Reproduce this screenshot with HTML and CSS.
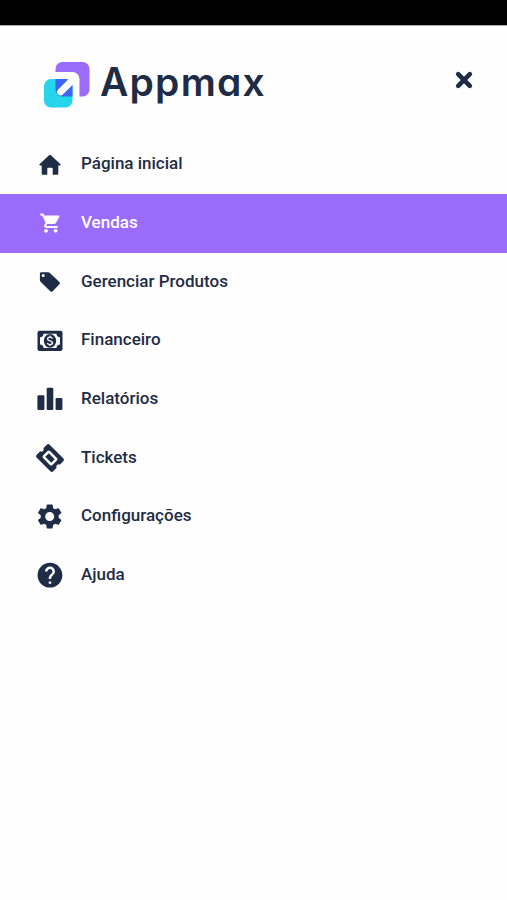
FILE: index.html
```html
<!DOCTYPE html>
<html lang="pt-BR">
<head>
    <meta charset="UTF-8">
    <meta name="viewport" content="width=device-width, initial-scale=1.0">
    <title>Appmax</title>
    <link rel="stylesheet" href="styles.css">
</head>
<body>
    <div class="status-bar"></div>

    <header class="header">
        <a class="logo" href="#">
            <svg class="logo-mark" viewBox="0 0 46 46">
                <path fill="#9b6bfb" d="M11.500 10V7a7 7 0 0 1 7-7H38.500a7 7 0 0 1 7 7v20.500a7 7 0 0 1-7 7h-3V17a7 7 0 0 0-7-7z"/>
                <rect fill="#25d5ea" y="17" width="28.500" height="28.500" rx="7"/>
                <path fill="#3e63f5" d="M11.500 17h10a7 7 0 0 1 7 7v10.500h-10a7 7 0 0 1-7-7z"/>
                <path stroke="#fefefe" stroke-width="7" stroke-linecap="round" d="M16.600 29.900L30 16.500"/>
            </svg>
            <span class="logo-text">Appmax</span>
        </a>
        <button class="close" aria-label="Fechar">
            <svg viewBox="0 0 20 20"><path d="M4.200 4.200l11.600 11.600M15.800 4.200L4.200 15.800"/></svg>
        </button>
    </header>

    <nav class="menu">
        <a class="item" href="#">
            <svg class="icon" viewBox="0 0 28 28"><path d="M13.100 4.300a1.300 1.300 0 0 1 1.800 0l9.400 8.700c.6.600.3 1.500-.5 1.500h-1.500v8.200a1 1 0 0 1-1 1h-4.600v-6.200a.8.800 0 0 0-.8-.8h-3.800a.8.800 0 0 0-.8.800v6.200H6.700a1 1 0 0 1-1-1v-8.200H4.200c-.8 0-1.100-.9-.5-1.500z"/></svg>
            <span>Página inicial</span>
        </a>
        <a class="item active" href="#">
            <svg class="icon" viewBox="0 0 28 28"><path transform="translate(3.300 2.600) scale(.96)" d="M7 18c-1.100 0-1.990.9-1.990 2S5.900 22 7 22s2-.9 2-2-.9-2-2-2zM1 2v2h2l3.600 7.590-1.350 2.450c-.16.280-.25.610-.25.960 0 1.100.9 2 2 2h12v-2H7.420c-.14 0-.25-.11-.25-.25l.03-.12.900-1.630h7.450c.75 0 1.410-.41 1.750-1.030l3.580-6.490A1 1 0 0 0 20 4H5.210l-.94-2H1zm16 16c-1.100 0-1.990.9-1.990 2s.890 2 1.990 2 2-.9 2-2-.9-2-2-2z"/></svg>
            <span>Vendas</span>
        </a>
        <a class="item" href="#">
            <svg class="icon" viewBox="0 0 28 28"><path fill-rule="evenodd" d="M5.300 4.200H12.200a2 2 0 0 1 1.400.6l9.800 9.100a1.700 1.700 0 0 1 0 2.400l-6.700 6.900a1.700 1.700 0 0 1-2.400 0l-9.700-9.400a2 2 0 0 1-.7-1.500V5.600a1.400 1.400 0 0 1 1.400-1.400zM7.200 5.900a1.500 1.500 0 1 0 0 3 1.500 1.500 0 0 0 0-3z"/></svg>
            <span>Gerenciar Produtos</span>
        </a>
        <a class="item" href="#">
            <svg class="icon" viewBox="0 0 28 28">
                <rect x="1.500" y="3.700" width="25" height="20.300" rx="2"/>
                <path class="cut" d="M7.500 6.700h13a3.600 3.600 0 0 0 3.500 3.500v7.300a3.600 3.600 0 0 0-3.500 3.500h-13A3.600 3.600 0 0 0 4 17.500v-7.300a3.600 3.600 0 0 0 3.500-3.500z"/>
                <ellipse cx="14" cy="13.800" rx="6.200" ry="6.900"/>
                <path class="line" stroke-width="1.400" d="M16.400 11.500c-.3-1-1.300-1.400-2.400-1.400-1.400 0-2.400.7-2.400 1.800 0 2.600 4.900 1.200 4.900 3.900 0 1.200-1.100 1.800-2.500 1.800-1.300 0-2.300-.6-2.600-1.700M14 8.700v1.400M14 17.600v1.400"/>
            </svg>
            <span>Financeiro</span>
        </a>
        <a class="item" href="#">
            <svg class="icon" viewBox="0 0 28 28">
                <rect x="1.400" y="10.300" width="7" height="14.700" rx="1.200"/>
                <rect x="10.700" y="2.700" width="6.600" height="22.300" rx="1.200"/>
                <rect x="19.600" y="13" width="6.800" height="12" rx="1.200"/>
            </svg>
            <span>Relatórios</span>
        </a>
        <a class="item" href="#">
            <svg class="icon" viewBox="0 0 28 28">
                <g transform="rotate(45 14 14)">
                    <path d="M4.400 4.900h19.200a2 2 0 0 1 2 2v4.900a2.300 2.300 0 0 0 0 4.400v4.900a2 2 0 0 1-2 2H4.400a2 2 0 0 1-2-2v-4.900a2.300 2.300 0 0 0 0-4.400V6.900a2 2 0 0 1 2-2z"/>
                    <rect class="line" stroke-width="2.500" x="8.600" y="10.300" width="10.800" height="7.400" rx=".5"/>
                </g>
            </svg>
            <span>Tickets</span>
        </a>
        <a class="item" href="#">
            <svg class="icon" viewBox="0 0 28 28"><path transform="translate(-1.300 -1.500) scale(1.250)" d="M19.140 12.940c.04-.3.060-.61.060-.94 0-.32-.02-.64-.07-.94l2.030-1.580a.49.490 0 0 0 .12-.61l-1.920-3.320a.488.488 0 0 0-.59-.22l-2.390.96c-.5-.38-1.030-.7-1.620-.94l-.36-2.540a.484.484 0 0 0-.48-.41h-3.840c-.24 0-.43.170-.47.410l-.36 2.540c-.59.240-1.130.57-1.620.94l-2.390-.96c-.22-.08-.47 0-.59.220L2.740 8.870c-.12.210-.08.470.12.610l2.030 1.580c-.05.300-.09.630-.09.940s.02.640.07.940l-2.030 1.580a.49.490 0 0 0-.12.610l1.920 3.320c.12.220.37.290.59.220l2.390-.96c.5.380 1.030.7 1.620.94l.36 2.540c.05.240.24.410.48.410h3.840c.24 0 .44-.17.470-.41l.36-2.540c.59-.24 1.130-.56 1.620-.94l2.390.96c.22.080.47 0 .59-.22l1.920-3.320c.12-.22.070-.47-.12-.61l-2.010-1.580zM12 15.600c-1.980 0-3.600-1.620-3.600-3.600s1.620-3.600 3.600-3.600 3.600 1.620 3.600 3.600-1.620 3.600-3.600 3.600z"/></svg>
            <span>Configurações</span>
        </a>
        <a class="item" href="#">
            <svg class="icon" viewBox="0 0 28 28"><path transform="translate(-.9 -.7) scale(1.240)" d="M12 2C6.480 2 2 6.480 2 12s4.480 10 10 10 10-4.480 10-10S17.520 2 12 2zm1 17h-2v-2h2v2zm2.070-7.750l-.9.920C13.450 12.900 13 13.500 13 15h-2v-.5c0-1.100.45-2.100 1.170-2.830l1.240-1.260c.37-.36.590-.86.590-1.410 0-1.100-.9-2-2-2s-2 .9-2 2H8c0-2.210 1.790-4 4-4s4 1.790 4 4c0 .88-.36 1.680-.93 2.250z"/></svg>
            <span>Ajuda</span>
        </a>
    </nav>
</body>
</html>
```
FILE: styles.css
```css
* {
    box-sizing: border-box;
}
body {
    margin: 0;
    min-height: 100vh;
    background: #fefefe;
    color: #1f2c45;
    font-family: Roboto, Arial, sans-serif;
}
.status-bar {
    height: 26px;
    background: #000;
    border-bottom: 1px solid #aaa;
}
.header {
    display: flex;
    align-items: flex-start;
    justify-content: space-between;
    height: 109.200px;
    padding: 36px 33px 0 44px;
}
.logo {
    display: flex;
    gap: 10px;
    color: inherit;
    text-decoration: none;
}
.logo-mark {
    width: 46px;
    height: 46px;
}
.logo-text {
    font-family: Inter, sans-serif;
    font-size: 39px;
    font-weight: 600;
    font-feature-settings: "cv11";
    letter-spacing: 1.200px;
    line-height: 40px;
}
.close {
    width: 20px;
    height: 20px;
    margin-top: 8px;
    padding: 0;
    border: none;
    background: none;
    cursor: pointer;
}
.close svg {
    display: block;
    stroke: #1f2c45;
    stroke-width: 4.600;
    stroke-linecap: round;
}
.item {
    display: flex;
    align-items: center;
    gap: 17px;
    height: 58.700px;
    padding-left: 36px;
    color: inherit;
    font-size: 17px;
    font-weight: 500;
    line-height: 20px;
    text-decoration: none;
}
.item span {
    margin-top: -2.600px;
}
.item.active {
    background: #9b6bfb;
    color: #fff;
}
.icon {
    width: 28px;
    height: 28px;
    fill: currentColor;
}
.icon .cut {
    fill: #fefefe;
}
.icon .line {
    fill: none;
    stroke: #fefefe;
}
```
